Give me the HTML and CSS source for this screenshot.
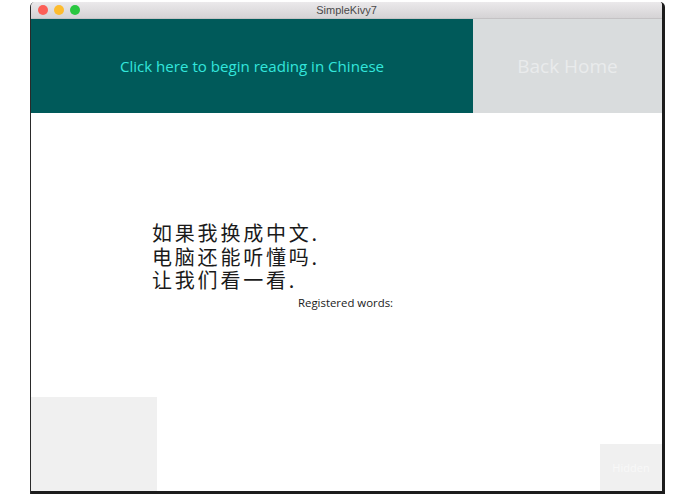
FILE: index.html
```html
<!DOCTYPE html>
<html>
<head>
<meta charset="utf-8">
<link rel="stylesheet" href="styles.css">
</head>
<body>
<div class="window">
  <div class="titlebar">
    <div class="lights">
      <span class="light red"></span>
      <span class="light yellow"></span>
      <span class="light green"></span>
    </div>
    <div class="title">SimpleKivy7</div>
  </div>
  <div class="header">
    <div class="btn-read">Click here to begin reading in Chinese</div>
    <div class="btn-home">Back Home</div>
  </div>
  <div class="main">
    <div class="chinese">
      <div class="line">如果我换成中文.</div>
      <div class="line">电脑还能听懂吗.</div>
      <div class="line">让我们看一看.</div>
    </div>
    <div class="registered">Registered words:</div>
  </div>
  <div class="bottom">
    <div class="box-left"></div>
    <div class="box-right">Hidden</div>
  </div>
  <div class="edge"></div>
</div>
</body>
</html>
```
FILE: styles.css
```css
html, body {
  margin: 0;
  padding: 0;
  background: #ffffff;
  width: 695px;
  height: 494px;
  overflow: hidden;
}

.window {
  margin-left: 30px;
  margin-top: 2px;
  width: 631px;
  height: 492px;
  border-left: 1px solid #2a2a2a;
  border-right: 3px solid #1c1c1c;
  border-top-left-radius: 5px;
  border-top-right-radius: 5px;
  background: #ffffff;
  display: flex;
  flex-direction: column;
  overflow: hidden;
  font-family: "Open Sans", "Noto Sans", sans-serif;
}

.titlebar {
  height: 17px;
  flex: none;
  background: linear-gradient(#ebe9eb, #d5d3d5);
  border-bottom: 1px solid #c4c2c4;
  box-sizing: border-box;
  display: flex;
  align-items: center;
  position: relative;
}

.lights {
  display: flex;
  gap: 6px;
  padding-left: 7px;
}

.light {
  width: 10px;
  height: 10px;
  border-radius: 50%;
  display: block;
}

.red { background: #fc5f57; }
.yellow { background: #fdbc2e; }
.green { background: #29c740; }

.title {
  position: absolute;
  left: 0;
  right: 0;
  top: 0;
  text-align: center;
  font-size: 11px;
  line-height: 17px;
  color: #4a4a4a;
  font-family: "Liberation Sans", "Noto Sans", sans-serif;
}

.header {
  height: 94px;
  flex: none;
  display: flex;
}

.btn-read {
  width: 442px;
  background: #005a5a;
  color: #33e6dc;
  font-size: 15.1px;
  display: flex;
  align-items: center;
  justify-content: center;
}

.btn-home {
  flex: 1;
  background: #d9dcdd;
  color: #e9ebec;
  font-size: 19px;
  display: flex;
  align-items: center;
  justify-content: center;
}

.main {
  flex: 1;
  padding-top: 108px;
  padding-left: 121px;
}

.chinese {
  font-family: "Noto Sans CJK SC", sans-serif;
  font-size: 20px;
  color: #1a1a1a;
  letter-spacing: 2.8px;
}

.line {
  height: 23.5px;
  line-height: 23.5px;
  overflow: visible;
}

.registered {
  margin-left: 146px;
  margin-top: 4px;
  font-size: 11.4px;
  line-height: 14px;
  color: #1a1a1a;
}

.bottom {
  height: 94px;
  flex: none;
  display: flex;
  justify-content: space-between;
  align-items: flex-end;
}

.box-left {
  width: 126px;
  height: 94px;
  background: #f0f0f0;
}

.box-right {
  width: 62px;
  height: 47px;
  background: #f0f0f0;
  color: #f8f8f8;
  font-size: 11px;
  display: flex;
  align-items: center;
  justify-content: center;
}

.edge {
  height: 3px;
  flex: none;
  background: #1c1c1c;
}
```
